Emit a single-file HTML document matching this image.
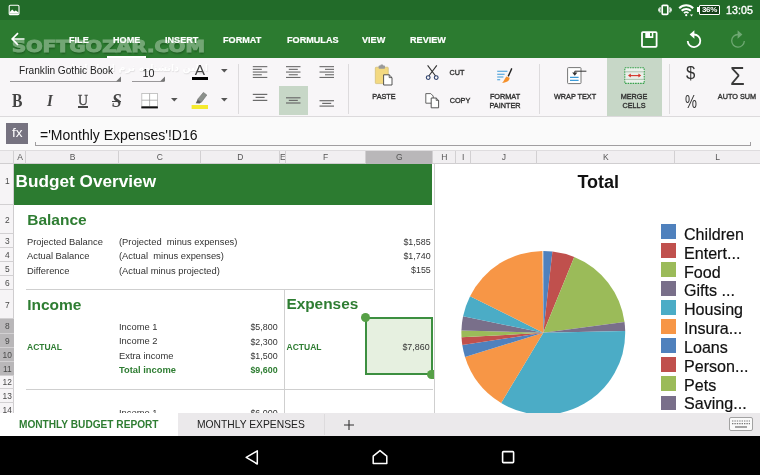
<!DOCTYPE html>
<html><head><meta charset="utf-8"><title>Budget</title>
<style>
*{box-sizing:border-box;margin:0;padding:0}
html,body{width:760px;height:475px;overflow:hidden;background:#fff}
body{font-family:"Liberation Sans",sans-serif;position:relative;color:#222}
.a{position:absolute;white-space:nowrap;line-height:1}
#status{left:0;top:0;width:760px;height:20px;background:#226b29}
#bar{left:0;top:20px;width:760px;height:37.7px;background:#2c7b30}
.tab{color:#fff;font-weight:bold;font-size:9.1px;top:36px;-webkit-text-stroke:0.2px #fff}
#ribbon{left:0;top:57.7px;width:760px;height:59.3px;background:#f8f6f8;border-bottom:1px solid #dcdadc}
.lbl{font-size:8px;color:#333;-webkit-text-stroke:0.38px #333;text-align:center;line-height:9.3px;transform:translateX(-50%) scaleX(0.91)}
.sep{width:1px;background:#dddbdd;top:64px;height:50px}
#fbar{left:0;top:117px;width:760px;height:33px;background:#fafafa}
#colh{left:0;top:150px;width:760px;height:14px;background:#f1eff1;border-top:1px solid #dedcde;border-bottom:1px solid #d0ced0}
.ch{font-size:8.5px;color:#555;top:153.4px;transform:translateX(-50%)}
.cs{width:1px;height:13px;top:151px;background:#d2d0d2}
#rowh{left:0;top:164px;width:13.6px;height:249px;background:#f6f4f6;border-right:1px solid #cfcdcf}
.rh{font-size:9.9px;color:#4a4a4a;left:-0.4px;width:14.6px;text-align:center;transform:scaleX(0.85)}
.rs{left:0;width:13.5px;height:1px;background:#d2d0d2}
.t{font-size:9.35px;color:#333}
.g{color:#2e7d32;font-weight:bold}
.r{text-align:right;transform:scaleX(0.95);transform-origin:100% 0}
.hl{height:1px;background:#cfcfcf}
#tabs{left:0;top:413px;width:760px;height:23px;background:#ebe9eb}
#nav{left:0;top:436px;width:760px;height:39px;background:#000}
.lg{font-size:16.1px;-webkit-text-stroke:0.2px #111;color:#111;left:684px}
.sw{left:661.4px;width:14.8px;height:14.5px}
</style></head><body><div id="wrap" style="position:absolute;left:0;top:0;width:760px;height:475px;will-change:transform">
<div class="a" id="status"></div>
<div class="a" id="bar"></div>
<div class="a tab" style="left:69px">FILE</div>
<div class="a tab" style="left:113px">HOME</div>
<div class="a tab" style="left:165px">INSERT</div>
<div class="a tab" style="left:223px">FORMAT</div>
<div class="a tab" style="left:287px">FORMULAS</div>
<div class="a tab" style="left:362px">VIEW</div>
<div class="a tab" style="left:410px">REVIEW</div>
<div class="a" style="left:107px;top:55.5px;width:39.3px;height:2.5px;background:#fff"></div>

<!-- status icons -->
<svg class="a" style="left:8px;top:3.5px" width="12" height="12" viewBox="0 0 12 12"><rect x="1.2" y="1.2" width="9.8" height="9.4" rx="1.2" fill="none" stroke="#fff" stroke-width="1.1"/><path d="M1.6 9.8V8.2L4.2 5.6L6.2 7.4L7.8 6.4L10.6 8.4V9.8Z" fill="#fff"/></svg>
<svg class="a" style="left:657px;top:4px" width="16" height="12" viewBox="0 0 16 12"><rect x="5.2" y="1.4" width="5.6" height="9" rx="0.8" fill="none" stroke="#fff" stroke-width="1.7"/><path d="M3.2 3.2Q2.2 6 3.2 8.6M12.8 3.2Q13.8 6 12.8 8.6" stroke="#fff" stroke-width="1.3" fill="none"/><path d="M1.7 4.4v3M14.3 4.4v3" stroke="#fff" stroke-width="0.9"/></svg>
<svg class="a" style="left:678px;top:4px" width="17" height="13" viewBox="0 0 17 13"><path d="M1.2 4.2 A10 10 0 0 1 15.2 4.2" fill="none" stroke="#fff" stroke-width="2"/><path d="M3.6 6.8 A6.6 6.6 0 0 1 12.8 6.8" fill="none" stroke="#fff" stroke-width="2"/><path d="M5.9 9.2 A3.4 3.4 0 0 1 10.5 9.2" fill="none" stroke="#fff" stroke-width="1.6"/><circle cx="8.2" cy="11.2" r="1.1" fill="#fff"/><path d="M12 10.5h3l-1.5 2z" fill="#fff"/></svg>
<div class="a" style="left:697px;top:7px;width:2px;height:5px;background:#fff"></div>
<div class="a" style="left:699px;top:5px;width:21px;height:10px;border:1px solid #fff;background:#143f18;border-radius:1px"></div>
<div class="a" style="left:700px;top:6px;width:19px;text-align:center;font-size:8px;font-weight:bold;color:#fff;letter-spacing:-0.3px">36%</div>
<div class="a" style="left:726px;top:5px;font-size:10.6px;color:#fff;-webkit-text-stroke:0.35px #fff;letter-spacing:0.1px">13:05</div>
<!-- toolbar icons -->
<svg class="a" style="left:10px;top:31px" width="16" height="16" viewBox="0 0 16 16"><path d="M14.5 8H2.2M8 2.2L2.2 8L8 13.8" fill="none" stroke="#fff" stroke-width="1.7"/></svg>
<svg class="a" style="left:640px;top:30px" width="19" height="19" viewBox="0 0 19 19"><rect x="2" y="2.2" width="14.6" height="14.6" rx="0.8" fill="none" stroke="#fff" stroke-width="1.8"/><rect x="5.3" y="2" width="8" height="6" fill="#fff"/><rect x="10" y="3" width="1.8" height="3.2" fill="#2c7b30"/></svg>
<svg class="a" style="left:684px;top:29px" width="20" height="22" viewBox="0 0 20 22"><path d="M10 5.5 A6.3 6.3 0 1 1 3.7 12" fill="none" stroke="#fff" stroke-width="1.8"/><path d="M10.4 1.2v8.6L5.6 5.5z" fill="#fff"/></svg>
<svg class="a" style="left:728px;top:29px" width="20" height="22" viewBox="0 0 20 22"><path d="M10 5.5 A6.3 6.3 0 1 0 16.3 12" fill="none" stroke="#6fa873" stroke-width="1.3"/><path d="M9.6 1.2v8.6L14.4 5.5z" fill="#6fa873"/></svg>
<!-- watermark -->
<div class="a" style="left:12.4px;top:40.3px;font-family:'DejaVu Sans','Liberation Sans',sans-serif;font-weight:bold;font-size:15px;color:#fff;opacity:0.33;text-shadow:0.5px 2px 1.5px rgba(0,30,0,0.9);transform:scaleX(1.305);transform-origin:0 0;-webkit-text-stroke:1px #fff">SOFTGOZAR.COM</div>
<div class="a" id="ribbon"></div>

<!-- ribbon content -->
<div class="a" dir="rtl" style="left:112px;top:59.5px;width:96px;text-align:center;font-family:'DejaVu Sans',sans-serif;font-weight:bold;font-size:9.6px;line-height:16px;color:#fff;text-shadow:0.5px 1px 1px rgba(60,60,60,0.12)">اولین دانشنامه نرم افزار ایران</div>

<div class="a" style="left:19px;top:65.8px;font-size:10.15px;color:#222">Franklin Gothic Book</div>
<div class="a" style="left:10px;top:81px;width:111px;height:1px;background:#9a989a"></div>
<svg class="a" style="left:116px;top:76px" width="6" height="6"><path d="M5 0.5V5.5H0z" fill="#777"/></svg>
<div class="a" style="left:142.6px;top:68px;font-size:10.8px;color:#222">10</div>
<div class="a" style="left:131.7px;top:81px;width:32.6px;height:1px;background:#9a989a"></div>
<svg class="a" style="left:159.5px;top:76px" width="6" height="6"><path d="M5 0.5V5.5H0z" fill="#777"/></svg>
<div class="a" style="left:194.8px;top:62.2px;font-size:15.4px;color:#444">A</div>
<div class="a" style="left:191.8px;top:77.2px;width:16.2px;height:3.3px;background:#000"></div>
<svg class="a" style="left:220px;top:68px" width="9" height="6"><path d="M1 1h6.6L4.3 4.4z" fill="#555"/></svg>
<div class="a" style="left:12.2px;top:91.6px;font-family:'Liberation Serif',serif;font-weight:bold;font-size:18.2px;color:#444;transform:scaleX(0.86);transform-origin:0 0">B</div>
<div class="a" style="left:47px;top:92.4px;font-family:'Liberation Serif',serif;font-weight:bold;font-style:italic;font-size:17px;color:#444;transform:scaleX(0.88);transform-origin:0 0">I</div>
<div class="a" style="left:78px;top:93.2px;font-family:'Liberation Serif',serif;font-size:14.8px;color:#484848;-webkit-text-stroke:0.35px #484848;transform:scaleX(0.94);transform-origin:0 0">U</div>
<div class="a" style="left:77.8px;top:106.2px;width:10px;height:1.4px;background:#484848"></div>
<div class="a" style="left:112.4px;top:91.6px;font-family:'Liberation Serif',serif;font-weight:bold;font-style:italic;font-size:18.2px;color:#444;transform:scaleX(0.95);transform-origin:0 0">S</div>
<div class="a" style="left:111.8px;top:100.6px;width:9.6px;height:1.1px;background:#444"></div>
<svg class="a" style="left:140px;top:92px" width="20" height="18" viewBox="0 0 20 18"><rect x="1.8" y="1.5" width="15.6" height="13" fill="#fff" stroke="#b8b8b8" stroke-width="0.8"/><path d="M9.6 1.5v13M1.8 8.2h15.6" stroke="#999" stroke-width="0.7"/><rect x="1.3" y="14.4" width="16.6" height="2" fill="#111"/></svg>
<svg class="a" style="left:170px;top:96.5px" width="9" height="6"><path d="M1 1h6.6L4.3 4.4z" fill="#555"/></svg>
<svg class="a" style="left:190px;top:88px" width="20" height="22" viewBox="0 0 20 22"><path d="M13.4 4.4l3.4 2.6-5.4 7.2-3.8-2.8z" fill="#8b908b" stroke="#6a6a6a" stroke-width="0.6"/><path d="M7.6 11.6l3.6 2.6-1.6 1.4-3.8-0.4z" fill="#5c5c5c"/><rect x="1.6" y="17" width="16.4" height="4" fill="#f5ea2e"/></svg>
<svg class="a" style="left:220px;top:96.5px" width="9" height="6"><path d="M1 1h6.6L4.3 4.4z" fill="#555"/></svg>
<div class="a sep" style="left:238px"></div>
<div class="a" style="left:278.7px;top:86px;width:29.3px;height:28.6px;background:#c7d7c7"></div>
<svg class="a" style="left:0;top:0" width="760" height="120"><rect x="252.8" y="66.1" width="14.5" height="1.1" fill="#6b6b6b"/>
<rect x="252.8" y="68.8" width="9" height="1.1" fill="#6b6b6b"/>
<rect x="252.8" y="71.5" width="14.5" height="1.1" fill="#6b6b6b"/>
<rect x="252.8" y="74.2" width="9" height="1.1" fill="#6b6b6b"/>
<rect x="252.8" y="76.9" width="14.5" height="1.1" fill="#6b6b6b"/>
<rect x="286.0" y="66.1" width="14.5" height="1.1" fill="#6b6b6b"/>
<rect x="288.8" y="68.8" width="9" height="1.1" fill="#6b6b6b"/>
<rect x="286.0" y="71.5" width="14.5" height="1.1" fill="#6b6b6b"/>
<rect x="288.8" y="74.2" width="9" height="1.1" fill="#6b6b6b"/>
<rect x="286.0" y="76.9" width="14.5" height="1.1" fill="#6b6b6b"/>
<rect x="319.5" y="66.1" width="14.5" height="1.1" fill="#6b6b6b"/>
<rect x="325.0" y="68.8" width="9" height="1.1" fill="#6b6b6b"/>
<rect x="319.5" y="71.5" width="14.5" height="1.1" fill="#6b6b6b"/>
<rect x="325.0" y="74.2" width="9" height="1.1" fill="#6b6b6b"/>
<rect x="319.5" y="76.9" width="14.5" height="1.1" fill="#6b6b6b"/>
<rect x="252.8" y="93.8" width="14.5" height="1.2" fill="#6b6b6b"/>
<rect x="255.6" y="96.8" width="9" height="1.2" fill="#6b6b6b"/>
<rect x="252.8" y="99.8" width="14.5" height="1.2" fill="#6b6b6b"/>
<rect x="286.0" y="97.2" width="14.5" height="1.2" fill="#6b6b6b"/>
<rect x="288.8" y="99.8" width="9" height="1.2" fill="#6b6b6b"/>
<rect x="286.0" y="102.4" width="14.5" height="1.2" fill="#6b6b6b"/>
<rect x="319.5" y="100.1" width="14.5" height="1.2" fill="#6b6b6b"/>
<rect x="322.2" y="102.8" width="9" height="1.2" fill="#6b6b6b"/>
<rect x="319.5" y="105.5" width="14.5" height="1.2" fill="#6b6b6b"/></svg>
<div class="a sep" style="left:348px"></div>
<!-- paste -->
<svg class="a" style="left:372px;top:63px" width="24" height="25" viewBox="0 0 24 25"><rect x="3.3" y="4.2" width="13" height="16.4" rx="0.8" fill="#f3d981" stroke="#c9b56a" stroke-width="0.6"/><rect x="6.6" y="2.6" width="6.4" height="3.2" rx="0.8" fill="#9a9a9a"/><rect x="8.4" y="1.6" width="2.8" height="2" rx="0.8" fill="#9a9a9a"/><path d="M11.6 11.8h5.6l2.8 2.8v7.4h-8.4z" fill="#fff" stroke="#444" stroke-width="0.9"/><path d="M17.2 11.8v2.8h2.8" fill="none" stroke="#444" stroke-width="0.8"/></svg>
<div class="a lbl" style="left:384px;top:92px">PASTE</div>
<!-- cut -->
<svg class="a" style="left:424px;top:63px" width="17" height="19" viewBox="0 0 17 19"><path d="M3.6 2.4L11.6 13M12.8 2.4L4.8 13" stroke="#333" stroke-width="1.1" fill="none"/><circle cx="4.2" cy="14.6" r="1.9" fill="none" stroke="#2b3f6b" stroke-width="1.1"/><circle cx="12.2" cy="14.6" r="1.9" fill="none" stroke="#2b3f6b" stroke-width="1.1"/></svg>
<div class="a lbl" style="left:457px;top:68.3px">CUT</div>
<svg class="a" style="left:424px;top:92px" width="17" height="18" viewBox="0 0 17 18"><path d="M1.8 1.6h5l2.4 2.4v7.2h-7.4z" fill="#fff" stroke="#555" stroke-width="0.9"/><path d="M7.2 6h5l2.4 2.4v7.4h-7.4z" fill="#fff" stroke="#444" stroke-width="0.9"/><path d="M12.2 6v2.4h2.4" fill="none" stroke="#444" stroke-width="0.8"/></svg>
<div class="a lbl" style="left:460px;top:96.3px">COPY</div>
<!-- format painter -->
<svg class="a" style="left:495px;top:66px" width="20" height="19" viewBox="0 0 20 19"><path d="M2.2 5.3h10.2M2.2 8.2h7.4M2.2 11h6.2M2.2 13.7h3" stroke="#3d9bd8" stroke-width="1.1"/><path d="M16.8 2.4l-3.6 8" stroke="#222" stroke-width="1.4"/><path d="M11.4 10.4l3.2 1.4c0 2.6-2.2 5-7.6 5 1.8-1.4 2.6-4 4.4-6.4z" fill="#f5912c"/></svg>
<div class="a lbl" style="left:505px;top:92px">FORMAT<br>PAINTER</div>
<div class="a sep" style="left:539px"></div>
<!-- wrap -->
<svg class="a" style="left:565px;top:65px" width="24" height="21" viewBox="0 0 24 21"><rect x="2.6" y="2.6" width="13.4" height="16" rx="0.8" fill="#fff" stroke="#777" stroke-width="1"/><path d="M21.4 6.2H9.8V8" stroke="#333" stroke-width="1" fill="none"/><path d="M7.2 7.4h5.2l-2.6 3.4z" fill="#333"/><path d="M5 12.3h8.6M5 15.4h8.6" stroke="#3d9bd8" stroke-width="1.2"/></svg>
<div class="a lbl" style="left:574.8px;top:92px">WRAP TEXT</div>
<!-- merge -->
<div class="a" style="left:607px;top:58px;width:55px;height:58px;background:#c7d7c7"></div>
<svg class="a" style="left:622px;top:65px" width="25" height="21" viewBox="0 0 25 21"><rect x="2.8" y="2.8" width="19.4" height="15.6" fill="#e9efe9" stroke="#35a04a" stroke-width="1.1" stroke-dasharray="1.6 0.9"/><path d="M3.4 6.8h18.2M3.4 14.4h18.2" stroke="#9fb79f" stroke-width="0.8"/><path d="M7.4 10.6h10.4" stroke="#d5342a" stroke-width="1.1"/><path d="M8.8 8.6l-2.8 2 2.8 2zM16.4 8.6l2.8 2-2.8 2z" fill="#d5342a"/></svg>
<div class="a lbl" style="left:634.3px;top:92px">MERGE<br>CELLS</div>
<div class="a sep" style="left:669px"></div>
<div class="a" style="left:686.4px;top:64.6px;font-size:17.6px;color:#333;transform:scaleX(0.95);transform-origin:0 0">$</div>
<div class="a" style="left:685px;top:92.7px;font-size:18.4px;color:#333;transform:scaleX(0.73);transform-origin:0 0">%</div>
<div class="a" style="left:730.4px;top:62.6px;font-size:26px;color:#3a3a3a;transform:scaleX(0.92);transform-origin:0 0">&#931;</div>
<div class="a lbl" style="left:737.4px;top:92px">AUTO SUM</div>
<div class="a" id="fbar"></div>
<div class="a" id="colh"></div>
<div class="a" id="rowh"></div>

<!-- formula bar -->
<div class="a" style="left:6.3px;top:122.5px;width:22px;height:21.3px;background:#767380"></div>
<div class="a" style="left:6.3px;top:126.2px;width:22px;text-align:center;font-size:13.6px;color:#fff">fx</div>
<div class="a" style="left:40px;top:127.6px;font-size:14px;color:#111">='Monthly Expenses'!D16</div>
<div class="a" style="left:35px;top:142px;width:716px;height:3.5px;border:1px solid #a09ea0;border-top:none"></div>
<!-- grid headers -->
<div class="a ch" style="left:20.2px">A</div>
<div class="a cs" style="left:13.0px"></div>
<div class="a ch" style="left:72.6px">B</div>
<div class="a cs" style="left:25.2px"></div>
<div class="a ch" style="left:159.8px">C</div>
<div class="a cs" style="left:117.9px"></div>
<div class="a ch" style="left:240.4px">D</div>
<div class="a cs" style="left:199.5px"></div>
<div class="a ch" style="left:282.9px">E</div>
<div class="a cs" style="left:279.1px"></div>
<div class="a ch" style="left:325.6px">F</div>
<div class="a cs" style="left:284.5px"></div>
<div class="a" style="left:365px;top:151px;width:67.5px;height:13px;background:#b9b7b9"></div>
<div class="a ch" style="left:399.4px">G</div>
<div class="a cs" style="left:364.5px"></div>
<div class="a ch" style="left:444.4px">H</div>
<div class="a cs" style="left:432.0px"></div>
<div class="a ch" style="left:463.1px">I</div>
<div class="a cs" style="left:454.5px"></div>
<div class="a ch" style="left:503.9px">J</div>
<div class="a cs" style="left:469.5px"></div>
<div class="a ch" style="left:605.9px">K</div>
<div class="a cs" style="left:536.0px"></div>
<div class="a ch" style="left:717.6px">L</div>
<div class="a cs" style="left:673.5px"></div>
<div class="a" style="left:0;top:318.4px;width:13.5px;height:56.6px;background:#b9b7b9"></div>
<div class="a rh" style="top:176.3px">1</div>
<div class="a rs" style="top:204.1px"></div>
<div class="a rh" style="top:215.2px">2</div>
<div class="a rs" style="top:233.2px"></div>
<div class="a rh" style="top:236.1px">3</div>
<div class="a rs" style="top:247.0px"></div>
<div class="a rh" style="top:250.1px">4</div>
<div class="a rs" style="top:261.2px"></div>
<div class="a rh" style="top:264.3px">5</div>
<div class="a rs" style="top:275.4px"></div>
<div class="a rh" style="top:278.2px">6</div>
<div class="a rs" style="top:289.0px"></div>
<div class="a rh" style="top:299.5px">7</div>
<div class="a rs" style="top:317.9px"></div>
<div class="a rh" style="top:321.2px">8</div>
<div class="a rs" style="top:332.5px"></div>
<div class="a rh" style="top:335.5px">9</div>
<div class="a rs" style="top:346.5px"></div>
<div class="a rh" style="top:349.8px">10</div>
<div class="a rs" style="top:361.1px"></div>
<div class="a rh" style="top:363.8px">11</div>
<div class="a rs" style="top:374.5px"></div>
<div class="a rh" style="top:377.4px">12</div>
<div class="a rs" style="top:388.3px"></div>
<div class="a rh" style="top:391.2px">13</div>
<div class="a rs" style="top:402.1px"></div>
<div class="a rh" style="top:405.3px">14</div>
<div class="a rs" style="top:416.5px"></div>
<!-- sheet -->
<div class="a" style="left:13.8px;top:164px;width:418.7px;height:40.8px;background:#2c7b30"></div>
<div class="a" style="left:15.6px;top:172.6px;font-size:17.2px;font-weight:bold;color:#fff">Budget Overview</div>
<div class="a g" style="left:27.2px;top:212.1px;font-size:15.5px">Balance</div>
<div class="a t" style="left:27px;top:237.8px">Projected Balance</div>
<div class="a t" style="left:27px;top:252.2px">Actual Balance</div>
<div class="a t" style="left:27px;top:266.6px">Difference</div>
<div class="a t" style="left:119px;top:237.8px;white-space:pre">(Projected  minus expenses)</div>
<div class="a t" style="left:119px;top:252.2px;white-space:pre">(Actual  minus expenses)</div>
<div class="a t" style="left:119px;top:266.6px">(Actual minus projected)</div>
<div class="a t r" style="right:329px;top:237.8px">$1,585</div>
<div class="a t r" style="right:329px;top:252.2px">$1,740</div>
<div class="a t r" style="right:329px;top:266.1px">$155</div>
<div class="a hl" style="left:26px;top:289px;width:406.5px"></div>
<div class="a hl" style="left:26px;top:388.5px;width:406.5px"></div>
<div class="a" style="left:284px;top:289px;width:1px;height:124px;background:#cfcfcf"></div>
<div class="a" style="left:434px;top:164px;width:1px;height:249px;background:#cfcfcf"></div>
<div class="a g" style="left:27.2px;top:296.9px;font-size:15.5px">Income</div>
<div class="a g" style="left:286.4px;top:296.4px;font-size:15.4px">Expenses</div>
<div class="a t" style="left:119px;top:323.2px">Income 1</div>
<div class="a t" style="left:119px;top:337.1px">Income 2</div>
<div class="a t" style="left:119px;top:351.8px">Extra income</div>
<div class="a t g" style="left:119px;top:366.0px">Total income</div>
<div class="a t r" style="right:482px;top:323.2px">$5,800</div>
<div class="a t r" style="right:482px;top:337.6px">$2,300</div>
<div class="a t r" style="right:482px;top:351.8px">$1,500</div>
<div class="a t g r" style="right:482px;top:366.0px">$9,600</div>
<div class="a t g" style="left:27px;top:342.7px;font-size:8.5px">ACTUAL</div>
<div class="a t g" style="left:286.6px;top:342.7px;font-size:8.5px">ACTUAL</div>
<div class="a" style="left:364.6px;top:317.4px;width:68px;height:57.6px;background:#e6f0e0;border:2px solid #3c8f40"></div>
<div class="a t r" style="right:330px;top:342.5px">$7,860</div>
<div class="a" style="left:360.8px;top:313.2px;width:9.2px;height:9.2px;border-radius:50%;background:#56a046"></div>
<div class="a" style="left:427.2px;top:370.2px;width:6.8px;height:9.2px;border-radius:4.6px 0 0 4.6px;background:#56a046"></div>
<div class="a t" style="left:119px;top:409.0px">Income 1</div>
<div class="a t r" style="right:482px;top:409.0px">$6,000</div>

<!-- chart -->
<div class="a" style="left:577.4px;top:172.6px;font-size:18px;font-weight:bold;color:#111">Total</div>
<svg class="a" style="left:0;top:0" width="760" height="413" viewBox="0 0 760 413"><path d="M543.3 332.8L543.30 250.90A81.9 81.9 0 0 1 552.43 251.41Z" fill="#4f81bd"/><path d="M543.3 332.8L552.43 251.41A81.9 81.9 0 0 1 574.25 256.97Z" fill="#c0504d"/><path d="M543.3 332.8L574.25 256.97A81.9 81.9 0 0 1 624.50 322.11Z" fill="#9bbb59"/><path d="M543.3 332.8L624.50 322.11A81.9 81.9 0 0 1 625.18 330.94Z" fill="#796f8a"/><path d="M543.3 332.8L625.18 330.94A81.9 81.9 0 0 1 501.12 403.00Z" fill="#4bacc6"/><path d="M543.3 332.8L501.12 403.00A81.9 81.9 0 0 1 465.02 356.88Z" fill="#f79646"/><path d="M543.3 332.8L465.02 356.88A81.9 81.9 0 0 1 462.32 345.05Z" fill="#4f81bd"/><path d="M543.3 332.8L462.32 345.05A81.9 81.9 0 0 1 461.53 337.37Z" fill="#c0504d"/><path d="M543.3 332.8L461.53 337.37A81.9 81.9 0 0 1 461.43 330.51Z" fill="#9bbb59"/><path d="M543.3 332.8L461.43 330.51A81.9 81.9 0 0 1 463.07 316.33Z" fill="#796f8a"/><path d="M543.3 332.8L463.07 316.33A81.9 81.9 0 0 1 470.07 296.13Z" fill="#4bacc6"/><path d="M543.3 332.8L470.07 296.13A81.9 81.9 0 0 1 542.44 250.90Z" fill="#f79646"/></svg>
<div class="a sw" style="top:224.0px;background:#4f81bd"></div><div class="a lg" style="top:225.9px">Children</div><div class="a sw" style="top:243.1px;background:#c0504d"></div><div class="a lg" style="top:244.7px">Entert...</div><div class="a sw" style="top:262.1px;background:#9bbb59"></div><div class="a lg" style="top:263.5px">Food</div><div class="a sw" style="top:281.1px;background:#796f8a"></div><div class="a lg" style="top:282.4px">Gifts ...</div><div class="a sw" style="top:300.2px;background:#4bacc6"></div><div class="a lg" style="top:301.2px">Housing</div><div class="a sw" style="top:319.2px;background:#f79646"></div><div class="a lg" style="top:320.0px">Insura...</div><div class="a sw" style="top:338.3px;background:#4f81bd"></div><div class="a lg" style="top:338.8px">Loans</div><div class="a sw" style="top:357.4px;background:#c0504d"></div><div class="a lg" style="top:357.6px">Person...</div><div class="a sw" style="top:376.4px;background:#9bbb59"></div><div class="a lg" style="top:376.5px">Pets</div><div class="a sw" style="top:395.5px;background:#796f8a"></div><div class="a lg" style="top:395.3px">Saving...</div>
<div class="a" id="tabs"></div>
<div class="a" id="nav"></div>

<div class="a" style="left:0;top:413px;width:178px;height:23px;background:#fff"></div>
<div class="a" style="left:19px;top:419.6px;font-size:10.15px;font-weight:bold;color:#2e7d32">MONTHLY BUDGET REPORT</div>
<div class="a" style="left:197px;top:419.6px;font-size:10.3px;color:#222">MONTHLY EXPENSES</div>
<div class="a" style="left:324px;top:414px;width:1px;height:21px;background:#dddbdd"></div>
<svg class="a" style="left:343px;top:419px" width="12" height="12"><path d="M6 1v10M1 6h10" stroke="#333" stroke-width="1.1"/></svg>
<svg class="a" style="left:728px;top:415px" width="26" height="18" viewBox="0 0 26 18"><rect x="1.5" y="2.5" width="23" height="13" rx="1.5" fill="#fafafa" stroke="#999" stroke-width="0.9"/><path d="M4 6h18M4 8.6h18" stroke="#777" stroke-width="1.2" stroke-dasharray="1.4 1"/><path d="M7 12h12" stroke="#777" stroke-width="1.3"/></svg>
<svg class="a" style="left:0;top:436px" width="760" height="39" viewBox="0 0 760 39"><path d="M257.3 14.8v13.2L246.2 21.4z" fill="none" stroke="#fff" stroke-width="1.5" stroke-linejoin="round"/><path d="M373.2 27.6v-7.4l6.8-5.6 6.8 5.6v7.4z" fill="none" stroke="#fff" stroke-width="1.5" stroke-linejoin="round"/><rect x="502.6" y="15.6" width="11" height="11" rx="0.8" fill="none" stroke="#fff" stroke-width="1.6"/></svg>
</div></body></html>
